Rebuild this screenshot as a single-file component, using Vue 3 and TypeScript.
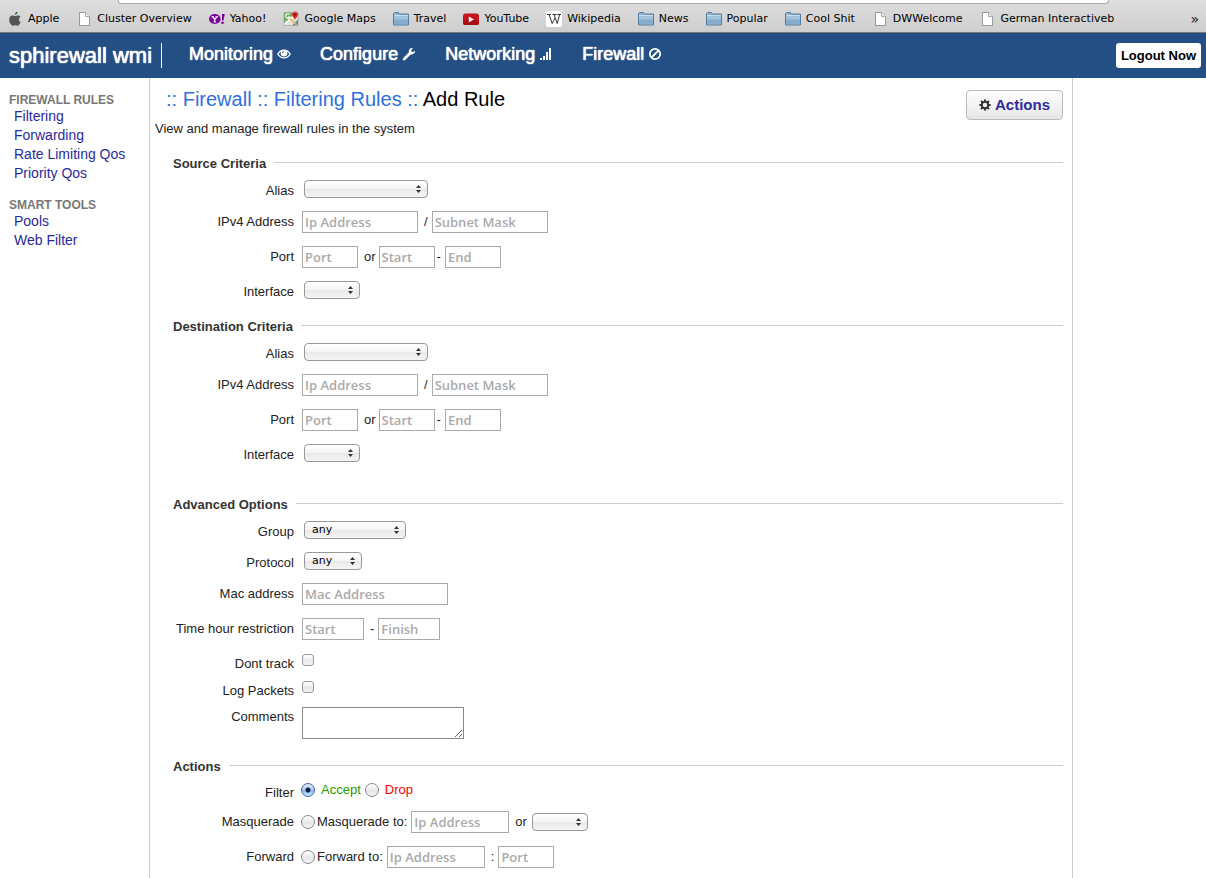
<script setup lang="ts">
import { ref } from 'vue'

type IconName = 'apple' | 'page' | 'yahoo' | 'maps' | 'folder' | 'youtube' | 'wikipedia'

interface Bookmark {
  label: string
  icon: IconName
}

interface NavItem {
  label: string
  icon: 'eye' | 'wrench' | 'signal' | 'ban'
}

const bookmarks: Bookmark[] = [
  { label: 'Apple', icon: 'apple' },
  { label: 'Cluster Overview', icon: 'page' },
  { label: 'Yahoo!', icon: 'yahoo' },
  { label: 'Google Maps', icon: 'maps' },
  { label: 'Travel', icon: 'folder' },
  { label: 'YouTube', icon: 'youtube' },
  { label: 'Wikipedia', icon: 'wikipedia' },
  { label: 'News', icon: 'folder' },
  { label: 'Popular', icon: 'folder' },
  { label: 'Cool Shit', icon: 'folder' },
  { label: 'DWWelcome', icon: 'page' },
  { label: 'German Interactiveb', icon: 'page' },
]

const navItems: NavItem[] = [
  { label: 'Monitoring', icon: 'eye' },
  { label: 'Configure', icon: 'wrench' },
  { label: 'Networking', icon: 'signal' },
  { label: 'Firewall', icon: 'ban' },
]

const menu = [
  { title: 'FIREWALL RULES', links: ['Filtering', 'Forwarding', 'Rate Limiting Qos', 'Priority Qos'] },
  { title: 'SMART TOOLS', links: ['Pools', 'Web Filter'] },
]

const criteria = [
  { id: 'source', title: 'Source Criteria' },
  { id: 'destination', title: 'Destination Criteria' },
]

const action = ref('accept')
const comments = ref('')
</script>

<template>
  <div class="page">
    <nav class="bookmarks" aria-label="Bookmarks">
      <div class="address-edge"></div>
      <ul class="bookmark-list">
        <li v-for="b in bookmarks" :key="b.label">
          <a href="#" class="bookmark">
            <svg class="bookmark-icon" viewBox="0 0 16 16" aria-hidden="true">
              <g v-if="b.icon === 'apple'" fill="#555">
                <path d="M10.6 0.8c.1 1.500-1.100 3-2.700 3.100C7.700 2.500 9 1 10.600.8z" />
                <path d="M13.600 11.300c-.7 1.700-1.700 3.400-3 3.400-.9 0-1.200-.5-2.300-.5s-1.500.5-2.300.5C4.300 14.700 2.200 11.600 2.200 8.700c0-2.700 1.700-4.200 3.400-4.200 1.100 0 1.900.6 2.600.6.6 0 1.600-.7 2.900-.7.900 0 1.900.5 2.500 1.400-2.300 1.400-2 4.600 0 5.500z" />
              </g>
              <g v-else-if="b.icon === 'page'">
                <path d="M3.500 1.500h6l4 4v9h-10z" fill="#fff" stroke="#999" />
                <path d="M9.500 1.500v4h4" fill="#eee" stroke="#aaa" />
              </g>
              <g v-else-if="b.icon === 'yahoo'">
                <ellipse cx="5.800" cy="8" rx="5.800" ry="5" fill="#7b0099" />
                <path d="M2.500 5.800h2.600M6.500 5.800h2.600M3.800 5.800l2 2.700 2-2.700M5.800 8.200v2.800M4.500 11h2.600" fill="none" stroke="#fff" stroke-width="1.200" />
                <path d="M13 3h2.800l-1.300 6.500h-1.500z" fill="#7b0099" />
                <circle cx="13.500" cy="11.700" r="1.300" fill="#7b0099" />
              </g>
              <g v-else-if="b.icon === 'maps'">
                <path d="M1 1.500h14v13H1z" fill="#e9e4d4" />
                <path d="M1 1.500h8V8l-8 6z" fill="#6fae5f" />
                <path d="M9 14.500l6-6v6z" fill="#5d80b8" />
                <path d="M1 13.500L13 3" stroke="#fff" stroke-width="2" />
                <path d="M7 8l7 6" stroke="#e6b94a" stroke-width="1.500" />
                <path d="M6.500 3.500a2.200 2.200 0 1 0 .3 2.500H5" fill="none" stroke="#fff" stroke-width="1.200" />
                <path d="M12 9.500c0-2.500-3-3.500-3-6a3 3 0 0 1 6 0c0 2.500-3 3.500-3 6z" fill="#d5281e" />
                <circle cx="12" cy="3.500" r="1" fill="#7c120d" />
                <path d="M1 1.500h14v13H1z" fill="none" stroke="#999" stroke-width=".6" />
              </g>
              <g v-else-if="b.icon === 'folder'">
                <path d="M.5 14V2.500l1-1h4l1 1.500h9V14z" fill="#8db4d3" stroke="#557c9c" />
                <path d="M1 5h14v8.500H1z" fill="#84adcd" />
                <path d="M1 5h14v3.500H1z" fill="#a0c3dc" />
                <path d="M1 4.500h14" stroke="#c4dcec" />
              </g>
              <g v-else-if="b.icon === 'youtube'">
                <rect x="0" y="2.500" width="16" height="11.500" rx="2.500" fill="#c4161c" />
                <rect x="0" y="9" width="16" height="5" rx="2.500" fill="#a80f14" />
                <path d="M5.800 5.500l5.200 2.900-5.200 2.900z" fill="#fff" />
              </g>
              <g v-else>
                <rect width="16" height="16" rx="2" fill="#fff" />
                <path d="M1 3.500h4M6.500 3.500h4M11.500 3.500H15M3 3.500l3.200 9L9 7M8 3.500l3.200 9 2.500-9" fill="none" stroke="#333" />
              </g>
            </svg>
            <span>{{ b.label }}</span>
          </a>
        </li>
      </ul>
      <button type="button" class="more" aria-label="More bookmarks">»</button>
    </nav>

    <header class="topbar">
      <a href="#" class="brand">sphirewall wmi</a>
      <nav class="nav" aria-label="Main">
        <a v-for="n in navItems" :key="n.label" href="#">
          <span>{{ n.label }}</span>
          <svg v-if="n.icon === 'eye'" class="nav-icon" viewBox="0 0 14 14" aria-hidden="true">
            <path d="M.8 7C3.800 1.800 10.200 1.800 13.200 7 10.200 12.200 3.800 12.200.8 7z" fill="none" stroke="#fff" stroke-width="1.400" />
            <circle cx="7" cy="6.300" r="3.300" fill="#fff" />
            <path d="M5.200 6.300A1.800 1.800 0 0 1 7 4.500" fill="none" stroke="#234f84" stroke-width=".8" />
          </svg>
          <svg v-else-if="n.icon === 'wrench'" class="nav-icon" viewBox="0 0 14 14" aria-hidden="true">
            <path d="M2.200 11.900L8.200 6" stroke="#fff" stroke-width="2.800" stroke-linecap="round" />
            <path d="M10.900 1.200L9.300 3.100l.3 1.600 1.600.3 1.900-1.500c.3 2.400-1.500 4.100-3.800 3.900L6.700 4.900C6.600 2.500 8.600.7 10.900 1.200z" fill="#fff" />
          </svg>
          <svg v-else-if="n.icon === 'signal'" class="nav-icon" viewBox="0 0 14 14" aria-hidden="true">
            <path d="M2 11v2M5 9v4M8 5v8M11 1v12" stroke="#fff" stroke-width="2" />
          </svg>
          <svg v-else class="nav-icon" viewBox="0 0 14 14" aria-hidden="true">
            <circle cx="7" cy="7" r="5.200" fill="none" stroke="#fff" stroke-width="1.800" />
            <path d="M3.500 10.500l7-7" stroke="#fff" stroke-width="1.800" />
          </svg>
        </a>
      </nav>
      <button type="button" class="logout">Logout Now</button>
    </header>

    <div class="body">
      <aside class="sidebar">
        <section v-for="group in menu" :key="group.title" class="menu-group">
          <h2>{{ group.title }}</h2>
          <a v-for="link in group.links" :key="link" href="#">{{ link }}</a>
        </section>
      </aside>

      <main class="main">
        <div class="heading">
          <div>
            <h1><span class="trail">:: <a href="#">Firewall</a> :: <a href="#">Filtering Rules</a> ::</span> Add Rule</h1>
            <p>View and manage firewall rules in the system</p>
          </div>
          <button type="button" class="actions">
            <svg viewBox="0 0 12 12" aria-hidden="true">
              <circle cx="6" cy="6" r="3.200" fill="none" stroke="#333" stroke-width="2" />
              <path d="M6 .4v2M6 9.600v2M.4 6h2M9.600 6h2M2 2l1.500 1.500M8.500 8.500L10 10M10 2L8.500 3.500M2 10l1.500-1.500" stroke="#333" stroke-width="2" />
            </svg>
            <span>Actions</span>
          </button>
        </div>

        <form @submit.prevent>
          <fieldset v-for="c in criteria" :key="c.id" :class="c.id">
            <legend>{{ c.title }}</legend>
            <div class="row pick">
              <label class="name" :for="c.id + '-alias'">Alias</label>
              <select :id="c.id + '-alias'" class="w-alias"><option></option></select>
            </div>
            <div class="row">
              <label class="name" :for="c.id + '-ip'">IPv4 Address</label>
              <input :id="c.id + '-ip'" type="text" class="w-ip" placeholder="Ip Address" />
              <span class="sep">/</span>
              <input type="text" class="w-ip" placeholder="Subnet Mask" aria-label="Subnet Mask" />
            </div>
            <div class="row">
              <label class="name" :for="c.id + '-port'">Port</label>
              <input :id="c.id + '-port'" type="text" class="w-port" placeholder="Port" />
              <span class="sep word">or</span>
              <input type="text" class="w-port" placeholder="Start" aria-label="Start port" />
              <span class="sep tight">-</span>
              <input type="text" class="w-port" placeholder="End" aria-label="End port" />
            </div>
            <div class="row pick">
              <label class="name" :for="c.id + '-interface'">Interface</label>
              <select :id="c.id + '-interface'" class="w-port"><option></option></select>
            </div>
          </fieldset>

          <fieldset>
            <legend>Advanced Options</legend>
            <div class="row pick">
              <label class="name" for="group">Group</label>
              <select id="group" class="w-group"><option>any</option></select>
            </div>
            <div class="row pick">
              <label class="name" for="protocol">Protocol</label>
              <select id="protocol" class="w-protocol"><option>any</option></select>
            </div>
            <div class="row">
              <label class="name" for="mac">Mac address</label>
              <input id="mac" type="text" class="w-mac" placeholder="Mac Address" />
            </div>
            <div class="row">
              <label class="name" for="start-hour">Time hour restriction</label>
              <input id="start-hour" type="text" class="w-hour" placeholder="Start" />
              <span class="sep">-</span>
              <input type="text" class="w-hour" placeholder="Finish" aria-label="Finish hour" />
            </div>
            <div class="row check">
              <label class="name" for="dont-track">Dont track</label>
              <input id="dont-track" type="checkbox" />
            </div>
            <div class="row check">
              <label class="name" for="log-packets">Log Packets</label>
              <input id="log-packets" type="checkbox" />
            </div>
            <div class="row notes">
              <label class="name" for="comments">Comments</label>
              <textarea id="comments" v-model="comments"></textarea>
            </div>
          </fieldset>

          <fieldset>
            <legend>Actions</legend>
            <div class="row filter">
              <span class="name">Filter</span>
              <input id="accept" v-model="action" type="radio" name="action" value="accept" />
              <label for="accept" class="choice accept">Accept</label>
              <input id="drop" v-model="action" type="radio" name="action" value="drop" />
              <label for="drop" class="choice drop">Drop</label>
            </div>
            <div class="row">
              <span class="name">Masquerade</span>
              <input id="masquerade" v-model="action" type="radio" name="action" value="masquerade" />
              <label for="masquerade" class="to">Masquerade to:</label>
              <input type="text" class="w-target" placeholder="Ip Address" aria-label="Masquerade address" />
              <span class="sep word">or</span>
              <select class="w-port" aria-label="Masquerade interface"><option></option></select>
            </div>
            <div class="row">
              <span class="name">Forward</span>
              <input id="forward" v-model="action" type="radio" name="action" value="forward" />
              <label for="forward" class="to">Forward to:</label>
              <input type="text" class="w-target" placeholder="Ip Address" aria-label="Forward address" />
              <span class="sep">:</span>
              <input type="text" class="w-port" placeholder="Port" aria-label="Forward port" />
            </div>
          </fieldset>
        </form>
      </main>
    </div>
  </div>
</template>

<style>
body {
  margin: 0;
  background: #fff;
}
</style>

<style scoped>
.page {
  display: flex;
  flex-direction: column;
  min-height: 100vh;
  font: 13px/20px "Liberation Sans", Arial, sans-serif;
  color: #222;
}

.page * {
  box-sizing: border-box;
}

a {
  text-decoration: none;
}

.bookmarks {
  position: relative;
  display: flex;
  align-items: center;
  height: 33px;
  padding: 6px 7px 0;
  border-bottom: 1px solid #777;
  background: linear-gradient(#dedede, #cecece);
  font: 11px/16px "DejaVu Sans", sans-serif;
}

.address-edge {
  position: absolute;
  top: 0;
  left: 118px;
  right: 97px;
  height: 4px;
  border: 1px solid #aaa;
  border-top: 0;
  border-radius: 0 0 3px 3px;
  background: #fff;
}

.bookmark-list {
  display: flex;
  flex: 1;
  gap: 17px;
  margin: 0;
  padding: 0;
  list-style: none;
}

.bookmark {
  display: flex;
  align-items: center;
  gap: 5px;
  color: #000;
  white-space: nowrap;
}

.bookmark-icon {
  width: 16px;
  height: 16px;
}

.more {
  padding: 0;
  border: 0;
  background: none;
  color: #222;
  font: 14px/16px "DejaVu Sans", sans-serif;
}

.topbar {
  display: flex;
  align-items: center;
  height: 45px;
  padding: 0 5px 0 9px;
  background: #234f84;
}

.brand {
  padding-right: 9px;
  border-right: 1px solid #fff;
  color: #fff;
  font-size: 22px;
  line-height: 25px;
  text-shadow: 0 0 1px #fff, 0 0 1px #fff;
}

.nav {
  display: flex;
  flex: 1;
  gap: 29px;
  padding: 0 0 3px 27px;
}

.nav a {
  display: flex;
  align-items: center;
  gap: 4px;
  color: #fff;
  font-size: 18px;
  text-shadow: 0 0 1px #fff, 0 0 1px #fff;
}

.nav-icon {
  width: 14px;
  height: 14px;
}

.logout {
  height: 25px;
  padding: 0 5px;
  border: 0;
  border-radius: 3px;
  background: #fff;
  color: #000;
  font: bold 13px/25px "Liberation Sans", Arial, sans-serif;
}

.body {
  display: grid;
  flex: 1;
  grid-template-columns: 150px 1fr 133px;
}

.sidebar {
  padding: 15px 0 0 9px;
  border-right: 1px solid #ccc;
}

.menu-group {
  margin-bottom: 15px;
}

.menu-group h2 {
  margin: 0;
  color: #777;
  font-size: 12px;
  line-height: 14px;
}

.menu-group a {
  display: block;
  padding-left: 5px;
  color: #2a2a9c;
  font-size: 14px;
  line-height: 19px;
}

.main {
  padding: 9px 9px 0 5px;
  border-right: 1px solid #ccc;
}

.heading {
  display: flex;
  justify-content: space-between;
  align-items: flex-start;
  margin-bottom: 13px;
}

.heading h1 {
  margin: 0;
  padding-left: 11px;
  color: #000;
  font-size: 20px;
  font-weight: normal;
  line-height: 24px;
}

.trail,
.trail a {
  color: #2f6fde;
}

.heading p {
  margin: 8px 0 0;
  line-height: 19px;
}

.actions {
  display: flex;
  align-items: center;
  gap: 4px;
  height: 30px;
  margin-top: 3px;
  padding: 0 12px;
  border: 1px solid #bbb;
  border-radius: 4px;
  background: linear-gradient(#fff, #e6e6e6);
  color: #2f2a9e;
  font: bold 15px/28px "Liberation Sans", Arial, sans-serif;
}

.actions svg {
  width: 12px;
  height: 12px;
}

fieldset {
  margin: 0 0 9px 10px;
  padding: 0;
  border: 0;
  border-top: 1px solid #ccc;
}

fieldset.destination {
  margin-bottom: 24px;
}

legend {
  padding: 4px 8px 0;
  color: #333;
  font-weight: bold;
  line-height: 18px;
}

.row {
  display: flex;
  align-items: center;
  height: 35px;
}

.pick {
  height: 31px;
}

.check {
  height: 27px;
}

.filter {
  height: 28px;
}

.notes {
  align-items: flex-start;
  height: auto;
  padding: 7px 0 6px;
}

.name {
  width: 129px;
  margin-right: 8px;
  text-align: right;
}

.pick .name {
  padding-top: 4px;
}

.check .name {
  padding-top: 8px;
}

.filter .name {
  padding-top: 6px;
}

.sep {
  padding: 0 4px 0 6px;
}

.word {
  padding-right: 3px;
}

.tight {
  padding-left: 2px;
}

input[type="text"] {
  height: 22px;
  padding: 0 2px;
  border: 1px solid #aaa;
  border-radius: 0;
  background: #fff;
  font: 600 13px/20px "Open Sans", sans-serif;
}

input::placeholder {
  color: #aaa;
  opacity: 1;
}

select {
  height: 18px;
  margin: 0 2px;
  padding: 0 7px;
  appearance: none;
  border: 1px solid #999;
  border-radius: 4px;
  background:
    url("data:image/svg+xml,%3Csvg xmlns='http://www.w3.org/2000/svg' width='5' height='8'%3E%3Cpath d='M0 3L2.5 0 5 3zM0 5L2.5 8 5 5z' fill='%23333'/%3E%3C/svg%3E") no-repeat right 6px center,
    linear-gradient(#fff, #f4f4f4 50%, #e9e9e9 50%, #f4f4f4);
  color: #000;
  font: 11px/16px "DejaVu Sans", sans-serif;
}

input[type="checkbox"] {
  width: 12px;
  height: 12px;
  margin: 0;
  appearance: none;
  border: 1px solid #999;
  border-radius: 3px;
  background: linear-gradient(#fff, #e8e8e8 60%, #f6f6f6);
}

input[type="radio"] {
  width: 14px;
  height: 14px;
  margin: 0 0 0 -1px;
  appearance: none;
  border: 1px solid #888;
  border-radius: 50%;
  background: linear-gradient(#fff, #e6e6e6 60%, #f8f8f8);
}

input[type="radio"]:checked {
  border-color: #4a62a8;
  background:
    radial-gradient(circle, #10203c 2px, transparent 3px),
    linear-gradient(#e4effc, #8fbcf0 60%, #c4ecff);
}

textarea {
  width: 162px;
  height: 32px;
  border: 1px solid #888;
  font: inherit;
  resize: both;
}

.choice {
  padding: 0 5px 0 6px;
}

.accept {
  color: #2a9c00;
}

.drop {
  color: #f00;
}

.to {
  padding: 0 4px 0 2px;
}

.w-alias {
  width: 124px;
}

.w-ip {
  width: 116px;
}

.w-port {
  width: 56px;
}

.w-group {
  width: 102px;
}

.w-protocol {
  width: 58px;
}

.w-mac {
  width: 146px;
}

.w-hour {
  width: 62px;
}

.w-target {
  width: 98px;
}
</style>
